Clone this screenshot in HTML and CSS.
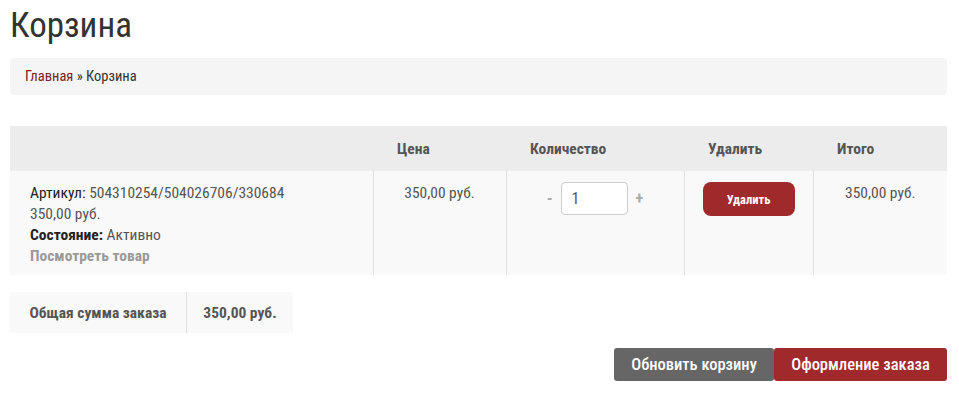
FILE: index.html
```html
<!DOCTYPE html>
<html lang="ru">
<head>
    <meta charset="UTF-8">
    <meta name="viewport" content="width=device-width, initial-scale=1.0">
    <title>Корзина</title>
    <link rel="stylesheet" href="styles.css">
</head>
<body>
    <div class="page">
        <h1 class="title">Корзина</h1>

        <div class="breadcrumb">
            <a href="#">Главная</a> » Корзина
        </div>

        <table class="cart">
            <thead>
                <tr>
                    <th class="col-item"></th>
                    <th class="col-price">Цена</th>
                    <th class="col-qty">Количество</th>
                    <th class="col-del">Удалить</th>
                    <th class="col-total">Итого</th>
                </tr>
            </thead>
            <tbody>
                <tr>
                    <td class="item">
                        <div><span class="label">Артикул:</span> 504310254/504026706/330684</div>
                        <div>350,00 руб.</div>
                        <div><b>Состояние:</b> Активно</div>
                        <a class="view" href="#">Посмотреть товар</a>
                    </td>
                    <td>350,00 руб.</td>
                    <td>
                        <div class="qty">
                            <span class="step">-</span>
                            <input class="qty-input" type="text" value="1">
                            <span class="step">+</span>
                        </div>
                    </td>
                    <td><button class="btn-del">Удалить</button></td>
                    <td>350,00 руб.</td>
                </tr>
            </tbody>
        </table>

        <table class="sum">
            <tr>
                <td class="sum-label">Общая сумма заказа</td>
                <td class="sum-value">350,00 руб.</td>
            </tr>
        </table>

        <div class="actions">
            <button class="btn btn-update">Обновить корзину</button>
            <button class="btn btn-order">Оформление заказа</button>
        </div>
    </div>
</body>
</html>
```

FILE: styles.css
```css
body {
    margin: 0;
    font-family: "Roboto Condensed", "Roboto", "Liberation Sans", sans-serif;
    font-stretch: condensed;
    color: #444;
    background: #fff;
}

.page {
    padding: 0 12px 0 10px;
}

.title {
    margin: 0;
    padding-top: 4px;
    font-size: 35px;
    font-weight: 400;
    line-height: 44px;
    color: #333;
}

.breadcrumb {
    margin-top: 10px;
    height: 37px;
    line-height: 37px;
    padding: 0 15px;
    background: #f5f5f5;
    border-radius: 4px;
    font-size: 14.5px;
    color: #333;
}

.breadcrumb a {
    color: #7d2024;
    text-decoration: none;
}

.cart {
    width: 100%;
    margin-top: 31px;
    border-collapse: collapse;
    font-size: 15.5px;
}

.cart th {
    height: 45px;
    padding: 0 0 0 24px;
    background: #ececec;
    text-align: left;
    font-weight: 700;
    color: #555;
}

.col-item { width: 339px; }
.col-price { width: 109px; }
.col-qty { width: 154px; }
.col-del { width: 105px; }

.cart td {
    height: 104px;
    padding: 12px 0 0;
    box-sizing: border-box;
    vertical-align: top;
    text-align: center;
    background: #f9f9f9;
    border-left: 1px solid #e2e2e2;
    line-height: 21px;
    color: #555;
}

.cart td.item {
    border-left: none;
    padding-left: 20px;
    text-align: left;
}

.item .label,
.item b {
    font-weight: 400;
    color: #222;
}

.item b {
    font-weight: 700;
}

.view {
    color: #999;
    font-weight: 700;
    text-decoration: none;
}

.qty {
    display: flex;
    justify-content: center;
    align-items: center;
    gap: 8px;
    margin-top: -1px;
}

.step {
    color: #aaa;
    font-weight: 700;
    font-size: 16px;
}

.qty-input {
    width: 67px;
    height: 33px;
    box-sizing: border-box;
    padding: 0 10px;
    border: 1px solid #ccc;
    border-radius: 4px;
    background: #fff;
    font: inherit;
    font-size: 16px;
    color: #555;
}

.btn-del {
    width: 92px;
    height: 34px;
    margin-top: -1px;
    border: none;
    border-radius: 8px;
    background: #a0292b;
    color: #fff;
    font-family: inherit;
    font-stretch: condensed;
    font-size: 12.5px;
    font-weight: 700;
}

.sum {
    margin-top: 17px;
    border-collapse: collapse;
    font-size: 15.5px;
    font-weight: 700;
    color: #555;
}

.sum td {
    height: 41px;
    background: #f9f9f9;
    text-align: center;
    padding: 0;
}

.sum-label {
    width: 176px;
}

.sum-value {
    width: 106px;
    border-left: 1px solid #e2e2e2;
}

.actions {
    display: flex;
    justify-content: flex-end;
    margin-top: 15px;
}

.btn {
    height: 33px;
    padding: 0 15px;
    border: none;
    border-radius: 3px;
    color: #fff;
    font-family: inherit;
    font-stretch: condensed;
    font-size: 16.5px;
    font-weight: 500;
}

.btn-update {
    width: 160px;
    background: #666;
}

.btn-order {
    width: 173px;
    background: #a0292b;
}
```
